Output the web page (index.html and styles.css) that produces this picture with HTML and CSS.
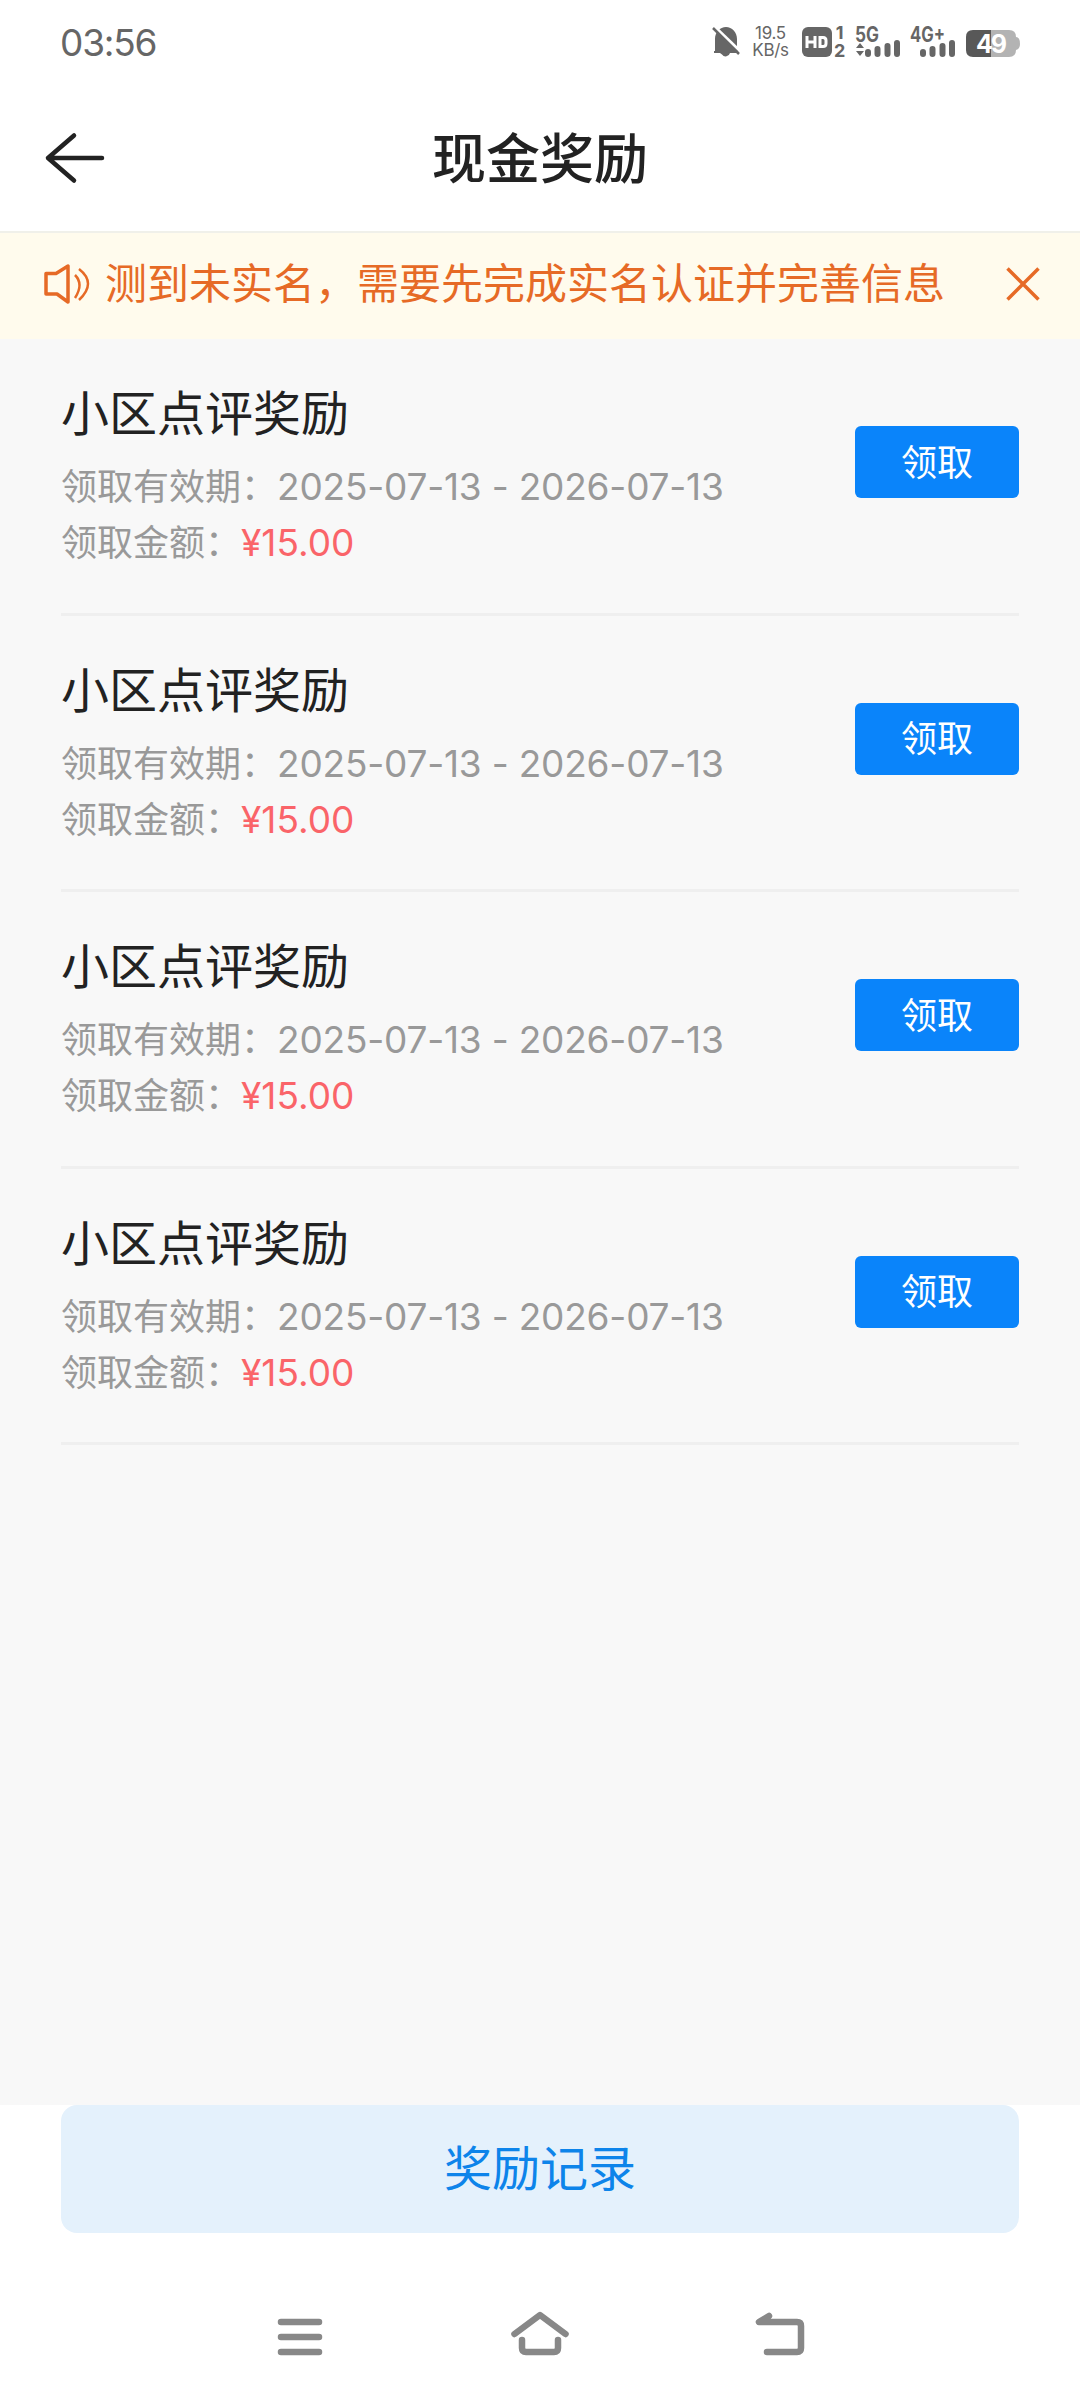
FILE: index.html
```html
<!DOCTYPE html>
<html lang="zh-CN">
<head>
<meta charset="UTF-8">
<meta name="viewport" content="width=device-width, initial-scale=1.0">
<title>现金奖励</title>
<link rel="stylesheet" href="styles.css">
</head>
<body>

<div class="statusBar">
  <span class="clock">03:56</span>
  <div class="statusIcons">
    <svg class="bell" width="28" height="32" viewBox="0 0 28 32">
      <path d="M3 25V13C3 6 8 1 14 1s11 5 11 12v9l2 5H18a4.500 4.500 0 0 1-8 1.500L8 27H2v-2z" fill="#666"/>
      <path d="M2 0L28 25" stroke="#fff" stroke-width="3"/>
      <path d="M1 2L27 28" stroke="#666" stroke-width="2.500"/>
    </svg>
    <div class="speed"><span>19.5</span><span>KB/s</span></div>
    <div class="hd">
      <svg width="30" height="30" viewBox="0 0 30 30">
        <rect width="30" height="30" rx="6" fill="#666"/>
        <path d="M5 9v12M13 9v12M5 15h8M18 10.500v9h3q3 0 3-3v-3q0-3-3-3z" fill="none" stroke="#fff" stroke-width="3"/>
      </svg>
      <div class="sims"><span>1</span><span>2</span></div>
    </div>
    <svg class="signal" width="46" height="32" viewBox="0 0 46 32">
      <text x="0" y="16" class="netType" textLength="24" lengthAdjust="spacingAndGlyphs">5G</text>
      <path d="M1 22l4-5 4 5zM1 25l4 5 4-5z" fill="#666"/>
      <path d="M13 26v2M22.500 23v5M32.500 20v8M42 17v11" stroke="#666" stroke-width="6" stroke-linecap="round"/>
    </svg>
    <svg class="signal2" width="46" height="32" viewBox="0 0 46 32">
      <text x="0" y="16" class="netType" textLength="35" lengthAdjust="spacingAndGlyphs">4G+</text>
      <path d="M13 26v2M22.500 23v5M32.500 20v8M42 17v11" stroke="#666" stroke-width="6" stroke-linecap="round"/>
    </svg>
    <svg class="battery" width="54" height="32" viewBox="0 0 54 32">
      <path d="M8 4h35q7 0 7 7 4 0 4 7 0 5-4 6 0 7-7 7H8z" fill="#b3b3b3"/>
      <path d="M25 4H7q-7 0-7 7v13q0 7 7 7h18z" fill="#585858"/>
      <text x="10" y="26.500" class="level" textLength="31">49</text>
    </svg>
  </div>
</div>

<header class="navBar">
  <svg class="back" width="60" height="52" viewBox="0 0 60 52">
    <path d="M29 3.500L3 26l26 22.500M3 26h54" fill="none" stroke="#222" stroke-width="4.500" stroke-linecap="round" stroke-linejoin="round"/>
  </svg>
  <h1>现金奖励</h1>
</header>

<div class="notice">
  <svg class="speaker" width="48" height="42" viewBox="0 0 48 42">
    <path d="M2 10.500h10L24 3v36l-11-8H2z" fill="none" stroke="#e66a26" stroke-width="3.500" stroke-linejoin="round"/>
    <path d="M31 12q9 9 0 23M35 6q18 14 0 31" fill="none" stroke="#e66a26" stroke-width="2.500"/>
  </svg>
  <p>测到未实名，需要先完成实名认证并完善信息</p>
  <svg class="close" width="34" height="34" viewBox="0 0 34 34">
    <path d="M1.500 1.500l31 31M32.500 1.500l-31 31" stroke="#e66a26" stroke-width="3.500"/>
  </svg>
</div>

<main class="rewardList">
  <div class="reward">
    <div class="info">
      <h2>小区点评奖励</h2>
      <p>领取有效期：<span class="date">2025-07-13 - 2026-07-13</span></p>
      <p>领取金额：<span class="amount">¥15.00</span></p>
    </div>
    <button class="getBtn">领取</button>
  </div>
  <div class="reward">
    <div class="info">
      <h2>小区点评奖励</h2>
      <p>领取有效期：<span class="date">2025-07-13 - 2026-07-13</span></p>
      <p>领取金额：<span class="amount">¥15.00</span></p>
    </div>
    <button class="getBtn">领取</button>
  </div>
  <div class="reward">
    <div class="info">
      <h2>小区点评奖励</h2>
      <p>领取有效期：<span class="date">2025-07-13 - 2026-07-13</span></p>
      <p>领取金额：<span class="amount">¥15.00</span></p>
    </div>
    <button class="getBtn">领取</button>
  </div>
  <div class="reward">
    <div class="info">
      <h2>小区点评奖励</h2>
      <p>领取有效期：<span class="date">2025-07-13 - 2026-07-13</span></p>
      <p>领取金额：<span class="amount">¥15.00</span></p>
    </div>
    <button class="getBtn">领取</button>
  </div>
</main>

<footer class="footer">
  <button class="recordBtn">奖励记录</button>
</footer>

<!-- system navigation keys -->
<nav class="systemNav">
  <svg width="60" height="48" viewBox="0 0 60 48">
    <path d="M11 13h38M11 28h38M11 43h38"/>
  </svg>
  <svg width="60" height="48" viewBox="0 0 60 48">
    <path d="M4.500 25L30 6l25.500 19M12 31v8q0 4 4 4h28q4 0 4-4v-8"/>
  </svg>
  <svg width="60" height="48" viewBox="0 0 60 48">
    <path d="M19 7L9 13h38q4 0 4 4v22q0 4-4 4H17"/>
  </svg>
</nav>

</body>
</html>
```
FILE: styles.css
```css
* {
  box-sizing: border-box;
}
body {
  margin: 0;
  height: 2400px;
  display: flex;
  flex-direction: column;
  font-family: Inter, "Noto Sans CJK SC", sans-serif;
  background-color: #fff;
  color: #222;
}
h1, h2, p {
  margin: 0;
  font-weight: 400;
}
button {
  border: none;
  padding: 0;
  font-family: inherit;
  cursor: pointer;
}
svg {
  display: block;
  flex-shrink: 0;
  overflow: visible;
}
.statusBar {
  height: 84px;
  padding: 0 60px;
  display: flex;
  justify-content: space-between;
  align-items: center;
}
.clock {
  font-size: 37px;
  letter-spacing: -1.2px;
  color: #666;
}
.statusIcons {
  display: flex;
  align-items: center;
}
.speed {
  width: 37px;
  margin: 0 13px 0 12px;
  display: flex;
  flex-direction: column;
  align-items: center;
  font-size: 17px;
  line-height: 17px;
  letter-spacing: -0.3px;
  color: #666;
}
.hd {
  width: 44px;
  display: flex;
  gap: 2px;
}
.sims {
  display: flex;
  flex-direction: column;
  justify-content: center;
  align-items: center;
  font-size: 18px;
  line-height: 18px;
  height: 30px;
  font-weight: 700;
  color: #666;
}
.hd, .signal {
  margin-right: 9px;
}
.signal2 {
  margin-right: 10px;
}
.netType {
  font-size: 21px;
  font-weight: 700;
  fill: #666;
}
.level {
  font-size: 25px;
  font-weight: 700;
  fill: #fff;
}
.navBar {
  height: 149px;
  padding: 0 45px;
  display: grid;
  grid-template-columns: 60px 1fr 60px;
  align-items: center;
  border-bottom: 2px solid #f0f0ea;
}
.navBar h1 {
  padding-top: 4px;
  font-size: 54px;
  line-height: 60px;
  font-weight: 500;
  text-align: center;
}
.notice {
  height: 106px;
  padding: 0 40px 4px 44px;
  display: flex;
  align-items: center;
  background-color: #fffbed;
  color: #e66a26;
}
.notice p {
  margin-left: 13px;
  font-size: 42px;
  line-height: 60px;
  white-space: nowrap;
}
.close {
  margin-left: auto;
}
.rewardList {
  flex: 1;
  padding: 0 61px;
  background-color: #f8f8f8;
}
.reward {
  height: 276.5px;
  padding-top: 42px;
  display: flex;
  justify-content: space-between;
  border-bottom: 3px solid #efefef;
}
.info h2 {
  font-size: 48px;
  line-height: 66px;
  margin-bottom: 12px;
}
.info p {
  font-size: 36px;
  line-height: 56px;
  color: #999;
  white-space: nowrap;
}
.date, .amount {
  font-size: 37px;
}
.date {
  letter-spacing: -0.2px;
}
.amount {
  color: #fa6469;
}
.getBtn {
  width: 164px;
  height: 72px;
  margin-top: 45px;
  padding-bottom: 5px;
  border-radius: 6px;
  background-color: #0a84fa;
  color: #fff;
  font-size: 36px;
}
.footer {
  height: 173px;
  padding: 0 61px;
}
.recordBtn {
  width: 100%;
  height: 128px;
  padding-bottom: 8px;
  border-radius: 16px;
  background-color: #e4f1fc;
  color: #0d84ea;
  font-size: 48px;
}
.systemNav {
  height: 122px;
  padding: 31px 0 0 270px;
  display: flex;
  gap: 180px;
}
.systemNav path {
  fill: none;
  stroke: #888;
  stroke-width: 6.5;
  stroke-linecap: round;
  stroke-linejoin: round;
}
```
